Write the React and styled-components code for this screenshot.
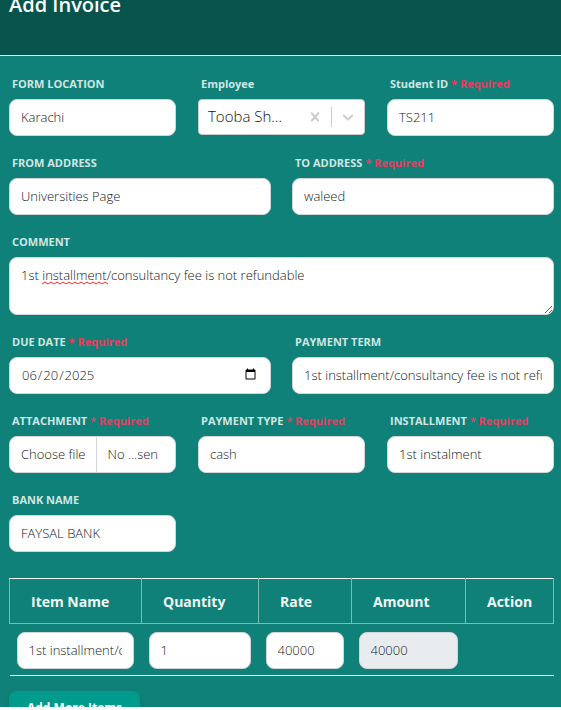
import React, { useState } from "react";
import styled, { createGlobalStyle, css } from "styled-components";

const GlobalStyle = createGlobalStyle`
  *, *::before, *::after { box-sizing: border-box; }
  body {
    margin: 0;
    background: #fff;
    font-family: "Open Sans", "Noto Sans", sans-serif;
    font-size: 14px;
    color: #495057;
  }
`;

const Panel = styled.div`
  height: calc(100vh - 3px);
  overflow: hidden;
  background: #108178;
`;

const Header = styled.header`
  height: 56px;
  padding: 0 9px;
  background: #07544d;
  border-bottom: 1px solid #e3f1ef;
  display: flex;
  align-items: flex-start;
`;

const Title = styled.h1`
  margin: -10px 0 0;
  font-size: 20px;
  line-height: 30px;
  font-weight: 600;
  color: #fff;
`;

const Form = styled.form`
  padding: 20px 7px 0 9px;
  display: flex;
  flex-direction: column;
  gap: 19px;
`;

const Row = styled.div`
  display: grid;
  grid-template-columns: repeat(${(p) => p.$columns}, minmax(0, 1fr));
  gap: ${(p) => (p.$columns === 2 ? 21 : 22)}px;
`;

const Field = styled.div`
  display: flex;
  flex-direction: column;
  gap: 7px;
`;

const Label = styled.label`
  margin-left: 3px;
  font-size: 11px;
  line-height: 16px;
  font-weight: 700;
  color: #cfe6e4;
  white-space: nowrap;
`;

const Required = styled.span`
  color: #ea3a5f;
`;

const control = css`
  display: block;
  width: 100%;
  min-width: 0;
  margin: 0;
  border: 1px solid #d2d6da;
  border-radius: 8px;
  background: #fff;
  color: #14181c;
  font-family: inherit;
  font-size: 13px;
  font-weight: 300;
  outline: none;
`;

const Input = styled.input`
  ${control}
  height: 37px;
  padding: 0 11px 2px;

  &:read-only {
    background: #e9ecef;
  }
  &::-webkit-datetime-edit {
    padding: 0;
  }
  &::-webkit-datetime-edit-fields-wrapper {
    padding: 0;
  }
`;

const FileBox = styled.label`
  ${control}
  position: relative;
  display: flex;
  height: 37px;
  line-height: 34px;
  overflow: hidden;
  white-space: nowrap;
`;

const FileInput = styled.input`
  position: absolute;
  inset: 0;
  width: 100%;
  opacity: 0;
`;

const FileButton = styled.span`
  padding: 0 10px 0 11px;
  border-right: 1px solid #d2d6da;
`;

const FileName = styled.span`
  padding: 0 11px;
  overflow: hidden;
  text-overflow: ellipsis;
`;

const CommentBox = styled.div`
  position: relative;
`;

const TextArea = styled.textarea`
  ${control}
  height: 58px;
  padding: 7px 11px;
  line-height: 20px;
  resize: vertical;
`;

const SpellingMark = styled.svg`
  position: absolute;
  left: 33px;
  top: 24px;
  width: 66px;
  height: 4px;
  pointer-events: none;
`;

const SelectBox = styled.div`
  display: flex;
  align-items: center;
  height: 36px;
  border: 1px solid #ccc;
  border-radius: 4px;
  background: #fff;
`;

const Select = styled.select`
  flex: 1;
  min-width: 0;
  height: 100%;
  padding: 0 9px 2px;
  border: 0;
  background: transparent;
  appearance: none;
  color: #111;
  font-family: inherit;
  font-size: 15px;
  font-weight: 300;
  outline: none;
`;

const IconButton = styled.button`
  display: flex;
  align-items: center;
  justify-content: center;
  width: 32px;
  height: 34px;
  padding: 0;
  border: 0;
  background: transparent;
  color: #ccc;
`;

const Separator = styled.span`
  width: 1px;
  height: 20px;
  background: #ccc;
`;

const ItemTable = styled.table`
  width: 100%;
  margin-top: 7px;
  border-collapse: collapse;
  table-layout: fixed;
  border-bottom: 1px solid #f0f8f7;
`;

const Column = styled.col`
  width: ${(p) => p.$width}px;
`;

const HeadCell = styled.th`
  height: 45px;
  padding: 0 0 0 21px;
  border: 1px solid #7cbab4;
  border-top-color: #f0f8f7;
  text-align: left;
  font-size: 14px;
  font-weight: 700;
  color: #f0f8f7;
`;

const Cell = styled.td`
  padding: 8px 8px 6px 7px;
`;

const AddButton = styled.button`
  align-self: flex-start;
  margin-top: -4px;
  height: 36px;
  padding: 0 18px 3px;
  border: 0;
  border-radius: 8px;
  background: #009b8c;
  box-shadow: 0 3px 6px rgba(0, 0, 0, 0.12);
  color: #fff;
  font-family: inherit;
  font-size: 12px;
  font-weight: 700;
`;

const columns = [
  { name: "Item Name", width: 132 },
  { name: "Quantity", width: 117 },
  { name: "Rate", width: 93 },
  { name: "Amount", width: 114 },
  { name: "Action", width: 88 },
];

const note = "1st installment/consultancy fee is not refundable";

function FieldLabel({ id, text, required }) {
  return (
    <Label htmlFor={id}>
      {text}
      {required && <Required> * Required</Required>}
    </Label>
  );
}

function TextField({ id, text, required, ...rest }) {
  return (
    <Field>
      <FieldLabel id={id} text={text} required={required} />
      <Input id={id} {...rest} />
    </Field>
  );
}

function AttachmentField() {
  const [fileName, setFileName] = useState("No ...sen");
  return (
    <Field>
      <FieldLabel id="attachment" text="ATTACHMENT" required />
      <FileBox>
        <FileButton>Choose file</FileButton>
        <FileName>{fileName}</FileName>
        <FileInput
          id="attachment"
          type="file"
          onChange={(e) => setFileName(e.target.files[0]?.name ?? "No ...sen")}
        />
      </FileBox>
    </Field>
  );
}

function EmployeeField() {
  const [employee, setEmployee] = useState("tooba");
  return (
    <Field>
      <FieldLabel id="employee" text="Employee" />
      <SelectBox>
        <Select id="employee" value={employee} onChange={(e) => setEmployee(e.target.value)}>
          <option value="" />
          <option value="tooba">Tooba Sh...</option>
        </Select>
        <IconButton type="button" aria-label="Clear employee" onClick={() => setEmployee("")}>
          <svg width="18" height="18" viewBox="0 0 20 20" fill="currentColor">
            <path d="M14.348 14.849c-0.469 0.469-1.229 0.469-1.697 0l-2.651-3.030-2.651 3.029c-0.469 0.469-1.229 0.469-1.697 0-0.469-0.469-0.469-1.229 0-1.697l2.758-3.15-2.759-3.152c-0.469-0.469-0.469-1.228 0-1.697s1.228-0.469 1.697 0l2.652 3.031 2.651-3.031c0.469-0.469 1.228-0.469 1.697 0s0.469 1.229 0 1.697l-2.758 3.152 2.758 3.15c0.469 0.469 0.469 1.229 0 1.698z" />
          </svg>
        </IconButton>
        <Separator />
        <IconButton type="button" aria-label="Show employees">
          <svg width="18" height="18" viewBox="0 0 20 20" fill="currentColor">
            <path d="M4.516 7.548c0.436-0.446 1.043-0.481 1.576 0l3.908 3.747 3.908-3.747c0.533-0.481 1.141-0.446 1.574 0 0.436 0.445 0.408 1.197 0 1.615-0.406 0.418-4.695 4.502-4.695 4.502-0.217 0.223-0.502 0.335-0.787 0.335s-0.57-0.112-0.789-0.335c0 0-4.287-4.084-4.695-4.502s-0.436-1.17 0-1.615z" />
          </svg>
        </IconButton>
      </SelectBox>
    </Field>
  );
}

export default function App() {
  return (
    <>
      <GlobalStyle />
      <Panel>
        <Header>
          <Title>Add Invoice</Title>
        </Header>
        <Form onSubmit={(e) => e.preventDefault()}>
          <Row $columns={3}>
            <TextField id="location" text="FORM LOCATION" defaultValue="Karachi" />
            <EmployeeField />
            <TextField id="student" text="Student ID" required defaultValue="TS211" />
          </Row>
          <Row $columns={2}>
            <TextField id="from" text="FROM ADDRESS" defaultValue="Universities Page" />
            <TextField id="to" text="TO ADDRESS" required defaultValue="waleed" />
          </Row>
          <Field>
            <FieldLabel id="comment" text="COMMENT" />
            <CommentBox>
              <TextArea id="comment" defaultValue={note} />
              <SpellingMark viewBox="0 0 66 4" aria-hidden="true">
                <path
                  d={"M0 3" + Array.from({ length: 11 }, () => "l3 -2l3 2").join("")}
                  fill="none"
                  stroke="#f22"
                  strokeWidth="1"
                />
              </SpellingMark>
            </CommentBox>
          </Field>
          <Row $columns={2}>
            <TextField id="due" text="DUE DATE" required type="date" defaultValue="2025-06-20" />
            <TextField id="term" text="PAYMENT TERM" defaultValue={note} />
          </Row>
          <Row $columns={3}>
            <AttachmentField />
            <TextField id="type" text="PAYMENT TYPE" required defaultValue="cash" />
            <TextField id="installment" text="INSTALLMENT" required defaultValue="1st instalment" />
          </Row>
          <Row $columns={3}>
            <TextField id="bank" text="BANK NAME" defaultValue="FAYSAL BANK" />
          </Row>
          <ItemTable>
            <colgroup>
              {columns.map((c) => (
                <Column key={c.name} $width={c.width} />
              ))}
            </colgroup>
            <thead>
              <tr>
                {columns.map((c) => (
                  <HeadCell key={c.name} scope="col">{c.name}</HeadCell>
                ))}
              </tr>
            </thead>
            <tbody>
              <tr>
                <Cell><Input aria-label="Item Name" defaultValue={note} /></Cell>
                <Cell><Input aria-label="Quantity" defaultValue="1" /></Cell>
                <Cell><Input aria-label="Rate" defaultValue="40000" /></Cell>
                <Cell><Input aria-label="Amount" defaultValue="40000" readOnly /></Cell>
                <Cell />
              </tr>
            </tbody>
          </ItemTable>
          <AddButton type="button">Add More Items</AddButton>
        </Form>
      </Panel>
    </>
  );
}
